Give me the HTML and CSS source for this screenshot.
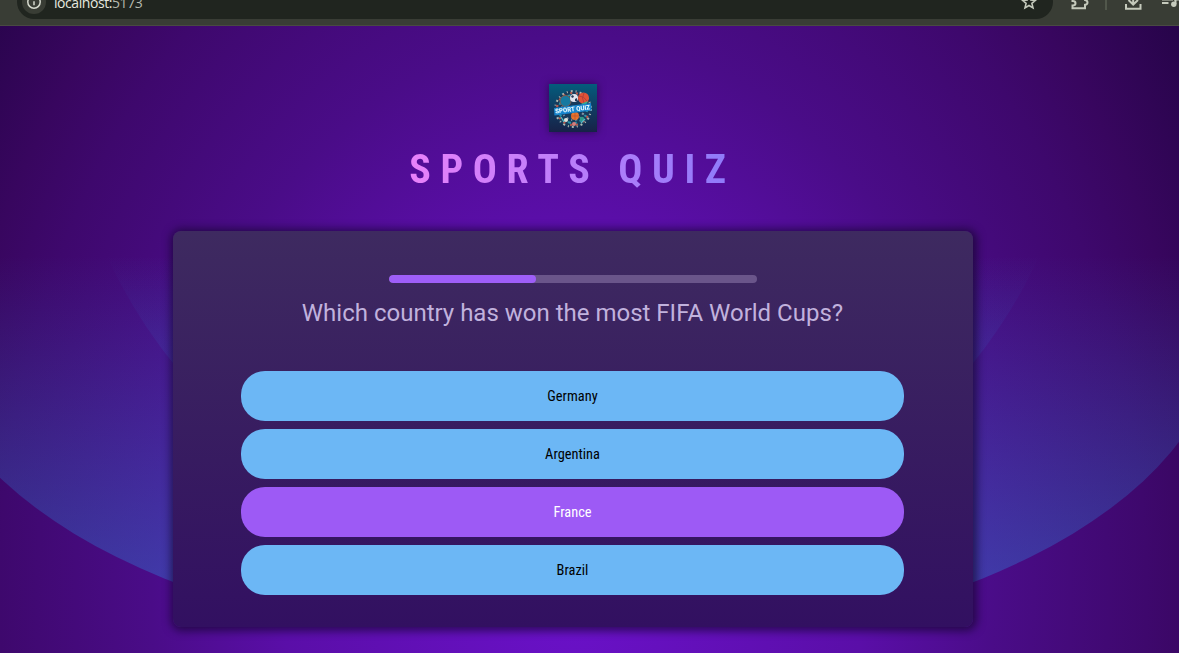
FILE: index.html
```html
<!DOCTYPE html>
<html lang="en">
<head>
<meta charset="utf-8">
<title>Sports Quiz</title>
<link rel="stylesheet" href="styles.css">
</head>
<body>
<div class="browser-bar">
  <div class="address">
    <span class="site-info"><svg width="16" height="16" viewBox="0 0 16 16"><circle cx="8" cy="8" r="6.2"/><path d="M8 7.2v4M8 4.2v1.5"/></svg></span>
    <span class="url">localhost:<span class="port">5173</span></span>
    <svg class="star" width="16" height="16" viewBox="0 0 16 16"><path d="M8 1.8l1.8 4.2 4.6.4-3.5 3 1.1 4.5L8 11.500l-4 2.400 1.100-4.500-3.500-3 4.600-.4z"/></svg>
  </div>
  <svg class="tools" width="110" height="26" viewBox="0 0 110 26">
    <path d="M3.500 -4V1Q6.500 1 6.500 3.200T3.500 5.500V8.200H16V4.800Q18.500 4.500 18.500 2.500T16 0V-4"/>
    <path class="divider" d="M37 0V10"/>
    <path d="M57 4V8.800H71.500V4M64.200 -4V4M59.500 0L64.200 4.500 69 0"/>
    <path d="M93 -.5H104M93 3H99.500M106.500 -3V4"/><circle class="note" cx="104.800" cy="4.200" r="2.700"/><path d="M105 -.5H110"/>
  </svg>
</div>
<div class="page">
  <svg class="backdrop" width="1179" height="627" viewBox="0 26 1179 627">
    <defs>
      <linearGradient id="fade" gradientUnits="userSpaceOnUse" x1="0" y1="255" x2="0" y2="582">
        <stop offset="0" stop-color="#2d8ade" stop-opacity="0"/><stop offset="1" stop-color="#2d8ade" stop-opacity=".36"/>
      </linearGradient>
      <clipPath id="band"><path d="M0 26h1179v592H0z"/></clipPath>
    </defs>
    <ellipse cx="573.500" cy="330" rx="646" ry="321" fill="url(#fade)" clip-path="url(#band)"/>
    <circle cx="573" cy="42" r="513" fill="url(#fade)"/>
  </svg>
  <main class="content">
    <header class="header">
      <svg class="logo" width="48" height="48" viewBox="0 0 48 48">
        <defs><linearGradient id="tile" x2="0" y2="1"><stop stop-color="#045c7c"/><stop offset=".5" stop-color="#103c62"/><stop offset="1" stop-color="#172247"/></linearGradient></defs>
        <path fill="url(#tile)" d="M0 0h48v48H0z"/>
        <circle cx="24" cy="25" r="18.500" fill="#173b5b"/>
        <g fill="none" stroke-width="2.200">
          <circle cx="24" cy="25" r="17.800" stroke="#a9b5b0" stroke-dasharray="2 3 1 3"/>
          <circle cx="24" cy="25" r="16" stroke="#b9574a" stroke-dasharray="2 5 2 4"/>
          <circle cx="24" cy="25" r="14" stroke="#2793a8" stroke-dasharray="3 3 2 4"/>
          <circle cx="24" cy="25" r="11" stroke="#8294a3" stroke-dasharray="1 3 2 3"/>
        </g>
        <circle cx="16.500" cy="17" r="5.500" fill="#1679a0" stroke="#7c5c51"/>
        <circle cx="25" cy="14" r="4" fill="#e0e3ed"/><path d="M22 12l2-1 1 2-2 1zM26 15l2-1v3h-2z" fill="#293955"/>
        <circle cx="34.500" cy="14" r="5.500" fill="#e05237"/><path d="M30 12q5 0 8 5M35 9q-3 5 0 10" fill="none" stroke="#a83d3b" stroke-width=".8"/>
        <path d="M32 20l7-3-2 4z" fill="#36b18c"/>
        <circle cx="26" cy="32" r="4" fill="#e7742d"/><path d="M22 32h8M26 28v8" stroke="#b9552f" stroke-width=".7"/>
        <circle cx="17" cy="36" r="2" fill="#dfe3da"/><circle cx="33" cy="35" r="2.300" fill="#2e9a87"/><circle cx="25" cy="40" r="2" fill="#d77c7b"/><path d="M12 33l3 5M32 39l4-4" stroke="#57b9c7" stroke-width="1.300"/>
        <path d="M5 24l37-5 .5 7.500-37 5z" fill="#1684cc"/>
        <text class="logo-text" x="6.500" y="29.500" transform="rotate(-7 6.500 29.500)" textLength="35" lengthAdjust="spacingAndGlyphs">SPORT QUIZ</text>
      </svg>
      <h1 class="title">Sports Quiz</h1>
    </header>
    <section class="quiz">
      <div class="progress"><div class="progress-value"></div></div>
      <h2 class="question">Which country has won the most FIFA World Cups?</h2>
      <ul class="answers">
        <li><button class="answer">Germany</button></li>
        <li><button class="answer">Argentina</button></li>
        <li><button class="answer selected">France</button></li>
        <li><button class="answer">Brazil</button></li>
      </ul>
    </section>
  </main>
</div>
</body>
</html>
```
FILE: styles.css
```css
* { box-sizing: border-box; }
body { margin: 0; height: 653px; overflow: hidden; font-family: Roboto, sans-serif; }
.browser-bar { height: 26px; display: flex; align-items: flex-start; background: #393d35; border-bottom: 1px solid #494a43; overflow: hidden; }
.address { display: flex; width: 1036px; height: 34px; margin: -15px 0 0 17px; background: #20251f; border-radius: 17px; padding: 5px 16px 0 5px; }
.site-info { width: 24px; height: 24px; border-radius: 50%; background: #393d35; padding: 4px; }
.site-info svg, .star { display: block; fill: none; stroke: #d5d9cd; stroke-width: 1.5; }
.url { margin: 0 auto 0 8px; font: 14px/25px "Open Sans", sans-serif; letter-spacing: -.43px; color: #e5e8df; }
.port { color: #b5baae; }
.star { margin-top: 4px; stroke: #c5cabc; stroke-width: 1.6; }
.tools { margin-left: 16px; fill: none; stroke: #c5cabc; stroke-width: 2; }
.tools .divider { stroke: #5a6053; stroke-width: 1.5; }
.tools .note { fill: #c5cabc; stroke: none; }
.page { display: grid; height: 627px; background: radial-gradient(860px 1150px at 573px 574px, #6a11c8 0%, #5a0ea8 33.5%, #4a0c88 49%, #3e086d 66.7%, #38065f 74%, #27044a 86%, #200340 100%); }
.backdrop, .content { grid-area: 1 / 1; }
.content { position: relative; width: 1146px; padding-top: 58px; }
.header { display: flex; flex-direction: column; align-items: center; height: 147px; }
.logo { display: block; filter: drop-shadow(0 0 4px rgba(20, 5, 45, .65)); }
.logo-text { font: 900 6.5px Roboto, sans-serif; fill: #e5f8ff; }
.title { margin: 14px 1px 0 0; font: 700 40px/47px "Roboto Condensed", Roboto, sans-serif; font-stretch: 75%; letter-spacing: 9.6px; text-transform: uppercase; background: linear-gradient(90deg, #e881fa, #8c7bfa); background-clip: text; -webkit-background-clip: text; color: transparent; }
.quiz { width: 800px; height: 396px; margin: 0 auto; padding: 44px 32px 32px; border-radius: 8px; background: linear-gradient(#3e2a60, #321061); box-shadow: 1px 1px 8px 3px rgba(12, 5, 32, .6); }
.progress { width: 368px; height: 8px; margin: 0 auto; border-radius: 4px; background: #6a558a; overflow: hidden; }
.progress-value { width: 40%; height: 8px; border-radius: 4px; background: #9e5ef8; }
.question { margin: 16px 0 44px; padding-right: 1px; font: 400 24px/28px Roboto, sans-serif; color: #c1b2dd; text-align: center; }
.answers { list-style: none; display: flex; flex-direction: column; align-items: center; gap: 8px; margin: 0; padding: 0 1px 0 0; }
.answers li { width: 663px; }
.answer { display: block; width: 100%; height: 50px; padding: 2px 0 0; border: 0; border-radius: 24px; background: #6cb7f5; color: #000; font: 400 14.4px/18px "Roboto Condensed", Roboto, sans-serif; font-stretch: 75%; }
.selected { background: #9d5af5; color: #fff; }
```
